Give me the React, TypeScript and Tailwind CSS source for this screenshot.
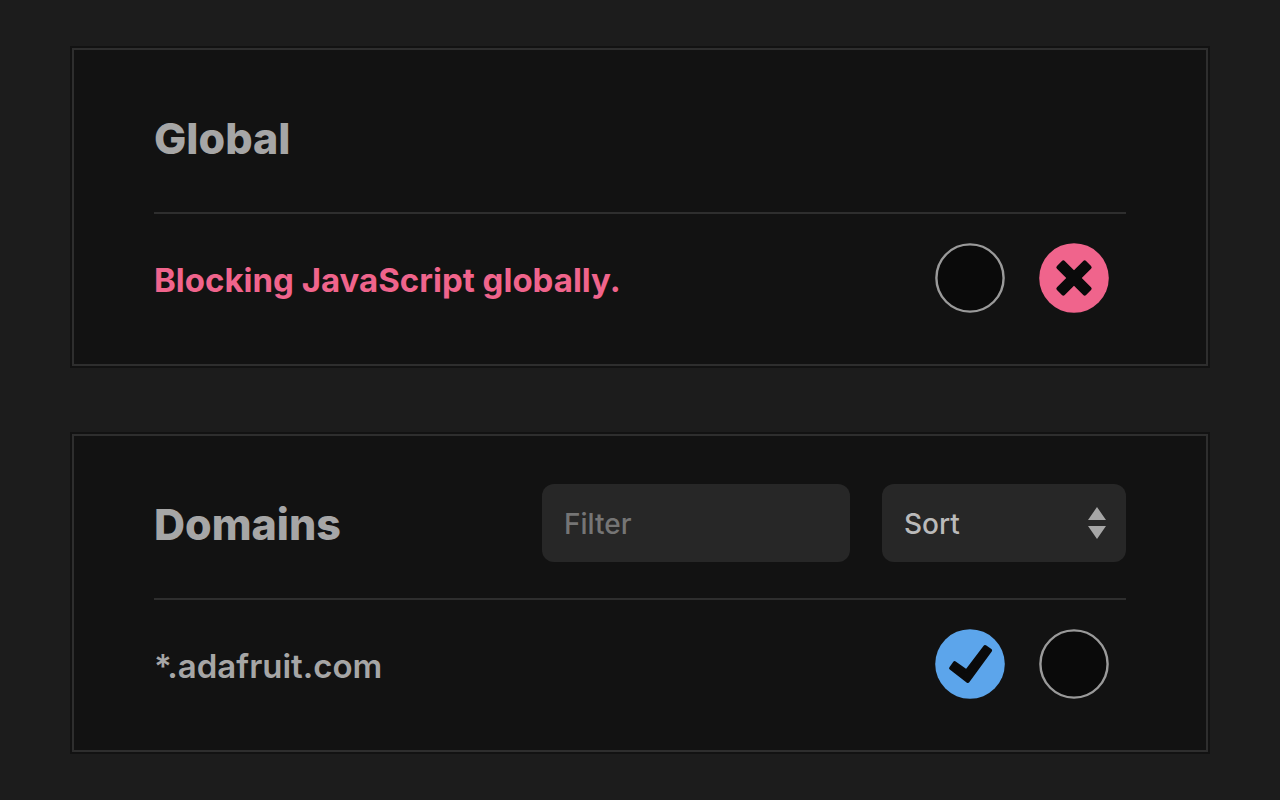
import { useState, type ReactNode } from "react";

type Rule = "allow" | "block";

function Mark({ rule, active }: { rule: Rule; active: boolean }) {
  if (!active) {
    return (
      <svg viewBox="0 0 70 70" className="size-full" aria-hidden="true">
        <circle cx="35" cy="35" r="33.6" fill="#0a0a0a" stroke="#9a9a9a" strokeWidth="2.4" />
      </svg>
    );
  }
  if (rule === "allow") {
    return (
      <svg viewBox="0 0 70 70" className="size-full" aria-hidden="true">
        <circle cx="35" cy="35" r="34.8" fill="#5ca5eb" />
        <path
          d="M15.8 39.2 L19.7 33.8 L31.4 42.2 L50 17.7 L55.4 21.5 L32.9 52.3 Z"
          fill="#0a0a0a"
          stroke="#0a0a0a"
          strokeWidth="3.4"
          strokeLinejoin="round"
        />
      </svg>
    );
  }
  return (
    <svg viewBox="0 0 70 70" className="size-full" aria-hidden="true">
      <circle cx="35" cy="35" r="34.8" fill="#f0648c" />
      <g transform="rotate(45 35 35)" fill="#0a0a0a">
        <rect x="14.4" y="29.5" width="41.2" height="11" rx="2" />
        <rect x="29.5" y="14.4" width="11" height="41.2" rx="2" />
      </g>
    </svg>
  );
}

function RuleSwitch({ name, initial }: { name: string; initial: Rule }) {
  const [value, setValue] = useState<Rule>(initial);
  const rules: Rule[] = ["allow", "block"];
  return (
    <div role="radiogroup" aria-label={name} className="flex shrink-0 gap-[34px] pr-[17px]">
      {rules.map((rule) => (
        <label key={rule} className="block size-[70px] cursor-pointer rounded-full">
          <input
            type="radio"
            name={name}
            aria-label={rule}
            checked={value === rule}
            onChange={() => setValue(rule)}
            className="sr-only"
          />
          <Mark rule={rule} active={value === rule} />
        </label>
      ))}
    </div>
  );
}

function Card({ title, controls, children }: { title: string; controls?: ReactNode; children: ReactNode }) {
  return (
    <section className="border-2 border-[#2e2e2e] bg-[#121212] px-20 ring-2 ring-[#121212]">
      <header className="flex items-start justify-between gap-8 border-b-2 border-[#2e2e2e] pt-12 pb-[34px]">
        <h2 className="text-[43px] leading-[80px] font-extrabold text-[#a6a6a6]">{title}</h2>
        {controls}
      </header>
      <div className="flex items-center justify-between gap-8 pt-[29px] pb-[51px]">{children}</div>
    </section>
  );
}

export default function App() {
  return (
    <main className="flex min-h-screen flex-col gap-[68px] bg-[#1c1c1c] px-[72px] py-12 font-['Inter',sans-serif]">
      <Card title="Global">
        <p className="pt-1 text-[33px] leading-10 font-bold text-[#f0648c]">Blocking JavaScript globally.</p>
        <RuleSwitch name="Global" initial="block" />
      </Card>

      <Card
        title="Domains"
        controls={
          <div className="flex gap-8">
            <input
              type="text"
              aria-label="Filter"
              placeholder="Filter"
              className="h-[78px] w-[308px] rounded-xl bg-[#272727] px-[22px] pt-0.5 text-[28px] font-medium text-[#bababa] outline-none placeholder:text-[#757575]"
            />
            <div className="relative">
              <select
                aria-label="Sort"
                className="h-[78px] w-[244px] appearance-none rounded-xl bg-[#272727] px-[22px] pt-0.5 text-[28px] font-medium text-[#bababa] outline-none"
              >
                <option>Sort</option>
              </select>
              <svg
                viewBox="0 0 18 32"
                className="pointer-events-none absolute top-[23px] right-5 h-8 w-[18px]"
                fill="#a6a6a6"
                aria-hidden="true"
              >
                <path d="M9 0 L18 13 H0 Z M0 19 H18 L9 32 Z" />
              </svg>
            </div>
          </div>
        }
      >
        <p className="pt-1 text-[33px] leading-10 font-semibold text-[#a6a6a6]">*.adafruit.com</p>
        <RuleSwitch name="*.adafruit.com" initial="allow" />
      </Card>
    </main>
  );
}
